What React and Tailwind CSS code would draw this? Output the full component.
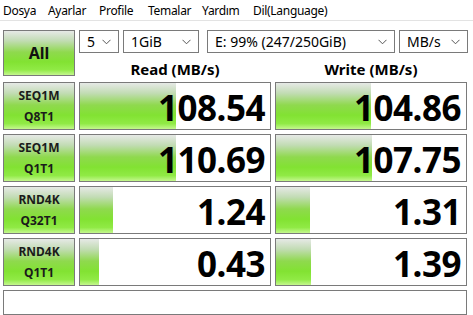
import React from 'react';

const menu = [
  { t: 'Dosya', w: 'w-[45px]' },
  { t: 'Ayarlar', w: 'w-[51px]' },
  { t: 'Profile', w: 'w-[49px]' },
  { t: 'Temalar', w: 'w-[54px]' },
  { t: 'Yardım', w: 'w-[51px]' },
  { t: 'Dil(Language)', w: 'w-auto' },
];

const rows = [
  { a: 'SEQ1M', b: 'Q8T1', read: '108.54', write: '104.86', rw: 96, ww: 95 },
  { a: 'SEQ1M', b: 'Q1T1', read: '110.69', write: '107.75', rw: 96, ww: 96 },
  { a: 'RND4K', b: 'Q32T1', read: '1.24', write: '1.31', rw: 33, ww: 34 },
  { a: 'RND4K', b: 'Q1T1', read: '0.43', write: '1.39', rw: 19, ww: 35 },
];

const green =
  'bg-[linear-gradient(to_bottom,#e6e9e6_0%,#c2dcb4_22%,#8fd94e_48%,#82e232_70%,#90ea45_88%,#c4f78e_100%)]';

const Chevron = () => (
  <svg width="9" height="6" viewBox="0 0 9 6" className="shrink-0">
    <path d="M0.5 0.8 L4.5 4.8 L8.5 0.8" fill="none" stroke="#555" strokeWidth="1" />
  </svg>
);

const Combo = ({ label, className }) => (
  <div className={`h-[23px] border border-[#7a7a7a] bg-white flex items-center justify-between pl-[7px] pr-[7px] text-[14px] text-black ${className}`}>
    <span className="leading-none">{label}</span>
    <Chevron />
  </div>
);

const Meter = ({ value, width }) => (
  <div className="relative w-[192px] h-[48px] border border-[#7a7a7a] bg-white flex items-center justify-end pr-[5px] overflow-hidden">
    <div className={`absolute left-0 top-0 bottom-0 ${green}`} style={{ width }} />
    <span className="relative font-bold text-[35px] leading-none tracking-[-0.5px] text-black pt-[3px]">{value}</span>
  </div>
);

const App = () => {
  return (
    <div className="w-[473px] h-[315px] bg-white overflow-hidden font-['Noto_Sans',sans-serif] text-black">
      <div className="h-[21px] border-b border-[#e3e3e3] flex items-center text-[12px] pl-[3px] tracking-[-0.3px]">
        {menu.map((m) => (
          <span key={m.t} className={`leading-none pt-[1px] shrink-0 ${m.w}`}>{m.t}</span>
        ))}
      </div>

      <div className="pl-[3px] pt-[9px] flex gap-[4px]">
        <div className={`w-[72px] h-[46px] border border-[#7a7a7a] ${green} flex items-center justify-center font-bold text-[16px] text-[#111]`}>
          All
        </div>
        <div className="flex flex-col">
          <div className="flex">
            <Combo label="5" className="w-[40px]" />
            <Combo label="1GiB" className="w-[76px] ml-[4px]" />
            <Combo label="E: 99% (247/250GiB)" className="w-[188px] ml-[8px]" />
            <Combo label="MB/s" className="w-[69px] ml-[4px]" />
          </div>
          <div className="flex mt-[2px] font-bold text-[15px] leading-none">
            <div className="w-[192px] text-center pt-[7px]">Read (MB/s)</div>
            <div className="w-[192px] ml-[4px] text-center pt-[7px]">Write (MB/s)</div>
          </div>
        </div>
      </div>

      <div className="pl-[3px] pt-[5px] flex flex-col gap-[4px]">
        {rows.map((r, i) => (
          <div key={i} className="flex gap-[4px]">
            <div className={`w-[72px] h-[48px] border border-[#7a7a7a] ${green} flex flex-col items-center justify-center font-bold text-[12px] leading-[21px] text-[#1b1b1b]`}>
              <span>{r.a}</span>
              <span>{r.b}</span>
            </div>
            <Meter value={r.read} width={r.rw} />
            <Meter value={r.write} width={r.ww} />
          </div>
        ))}
        <div className="w-[464px] h-[25px] border border-[#7a7a7a] bg-white" />
      </div>
    </div>
  );
};

export default App;
